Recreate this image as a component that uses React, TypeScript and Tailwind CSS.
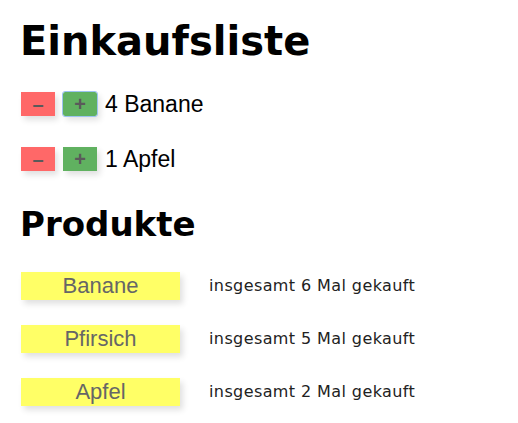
import React from 'react';

const einkauf = [
  { name: 'Banane', menge: 4, focused: true },
  { name: 'Apfel', menge: 1, focused: false },
];

const produkte = [
  { name: 'Banane', gekauft: 6 },
  { name: 'Pfirsich', gekauft: 5 },
  { name: 'Apfel', gekauft: 2 },
];

const CountButton: React.FC<{ label: string; className: string; focused?: boolean }> = ({ label, className, focused }) => (
  <button
    className={`w-[34px] h-[24px] flex items-center justify-center text-[20px] font-bold text-[#5a5a5a] leading-none shadow-[3px_4px_6px_rgba(0,0,0,0.12)] ${className} ${
      focused ? 'outline outline-1 outline-[#9cc3f0] rounded-[2px]' : ''
    }`}
    style={{ fontFamily: '"Liberation Sans", Arial, sans-serif' }}
  >
    {label}
  </button>
);

export default function App() {
  return (
    <div className="bg-white min-h-[423px] px-5 pt-[21px]">
      <h1
        className="text-[40px] font-bold leading-none text-black"
        style={{ fontFamily: '"DejaVu Sans", Verdana, sans-serif' }}
      >
        Einkaufsliste
      </h1>
      <ul className="ml-px mt-[31px] flex flex-col gap-[31px]">
        {einkauf.map((e) => (
          <li key={e.name} className="flex items-center h-[24px]">
            <CountButton label="–" className="bg-[#ff6868]" />
            <div className="w-2" />
            <CountButton label="+" className="bg-[#60b160]" focused={e.focused} />
            <span
              className="ml-2 text-[23px] text-black"
              style={{ fontFamily: '"Liberation Sans", Arial, sans-serif' }}
            >
              {e.menge} {e.name}
            </span>
          </li>
        ))}
      </ul>
      <h2
        className="mt-[36px] text-[34px] font-bold leading-none text-black"
        style={{ fontFamily: '"DejaVu Sans", Verdana, sans-serif' }}
      >
        Produkte
      </h2>
      <ul className="ml-px mt-[31px] flex flex-col gap-[25px]">
        {produkte.map((p) => (
          <li key={p.name} className="flex items-center h-[28px]">
            <button
              className="w-[159px] h-[28px] bg-[#ffff66] text-[#666] text-[22px] leading-none shadow-[3px_4px_6px_rgba(0,0,0,0.12)]"
              style={{ fontFamily: '"Liberation Sans", Arial, sans-serif' }}
            >
              {p.name}
            </button>
            <span
              className="ml-[29px] text-[16px] tracking-[0.4px] text-[#222]"
              style={{ fontFamily: '"DejaVu Sans", Verdana, sans-serif' }}
            >
              insgesamt {p.gekauft} Mal gekauft
            </span>
          </li>
        ))}
      </ul>
    </div>
  );
}
